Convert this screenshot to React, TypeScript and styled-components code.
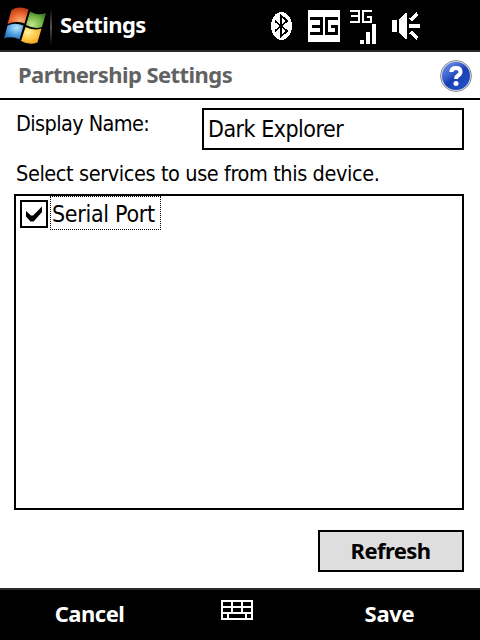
import React from "react";
import styled, { createGlobalStyle } from "styled-components";

const GlobalStyle = createGlobalStyle`
  * { box-sizing: border-box; }
  body { margin: 0; background: #fff; }
`;

const regular = `"DejaVu Sans Condensed", "DejaVu Sans", sans-serif`;
const bold = `"Noto Sans", "Open Sans", sans-serif`;

const Screen = styled.div`
  width: 480px;
  height: 640px;
  display: flex;
  flex-direction: column;
  background: #fff;
  color: #000;
  overflow: hidden;
`;

const Label = styled.span<{ $track?: number; $heavy?: boolean; $size?: number }>`
  font-family: ${(p) => (p.$heavy ? bold : regular)};
  font-stretch: ${(p) => (p.$heavy ? "normal" : "condensed")};
  font-weight: ${(p) => (p.$heavy ? 700 : 400)};
  font-size: ${(p) => p.$size ?? 22}px;
  line-height: 30px;
  letter-spacing: ${(p) => p.$track ?? 0}px;
  white-space: nowrap;
`;

const StatusBar = styled.header`
  height: 52px;
  flex: none;
  display: flex;
  align-items: flex-start;
  background: #000;
  border-bottom: 2px solid #2a2a2a;
  color: #fff;
`;

const StartArea = styled.div`
  width: 60px;
  height: 50px;
  flex: none;
`;

const StatusTitle = styled.div`
  width: 210px;
  padding-top: 9px;
`;

const TitleBar = styled.div`
  height: 48px;
  flex: none;
  display: flex;
  justify-content: space-between;
  border-bottom: 2px solid #000;
  padding: 7px 7px 0 18px;
  color: #626262;
`;

const Content = styled.main`
  flex: 1;
  display: flex;
  flex-direction: column;
  padding: 8px 16px 16px 14px;
`;

const NameRow = styled.div`
  display: flex;
  justify-content: space-between;
  padding-left: 2px;
`;

const NameCaption = styled.div`
  padding-top: 1px;
`;

const NameField = styled.div`
  width: 262px;
  height: 42px;
  border: 2px solid #000;
  padding: 4px 4px;
`;

const Hint = styled.div`
  height: 44px;
  padding: 9px 0 0 2px;
`;

const ServiceList = styled.div`
  height: 316px;
  border: 2px solid #000;
  padding: 0 4px;
`;

const ServiceItem = styled.div`
  display: flex;
  align-items: flex-start;
  gap: 2px;
`;

const CheckBox = styled.svg`
  width: 28px;
  height: 28px;
  margin-top: 4px;
`;

const FocusedName = styled.div`
  width: 111px;
  height: 34px;
  border: 1px dotted #000;
  padding: 2px 0 0 1px;
`;

const RefreshButton = styled.button`
  align-self: flex-end;
  width: 146px;
  height: 42px;
  margin-top: 20px;
  padding: 0 1px 2px 0;
  border: 2px solid #000;
  border-radius: 0;
  background: #dedede;
  color: #000;
`;

const SoftKeys = styled.footer`
  height: 52px;
  flex: none;
  display: grid;
  grid-template-columns: 179px 116px 189px;
  justify-items: center;
  border-top: 2px solid #2a2a2a;
  background: #000;
  color: #fff;
`;

const SoftKey = styled.div`
  padding-top: 8px;
`;

const KeyboardIcon = styled.svg`
  width: 32px;
  height: 20px;
  margin-top: 10px;
`;

function StartLogo() {
  return (
    <svg width="60" height="50" viewBox="0 0 60 50">
      <defs>
        <radialGradient id="r" cx="0.6" cy="0.8" r="0.8"><stop stopColor="#f8b07a" /><stop offset="0.5" stopColor="#ee6a34" /><stop offset="1" stopColor="#b8380e" /></radialGradient>
        <radialGradient id="g" cx="0.3" cy="0.8" r="0.9"><stop stopColor="#c3e590" /><stop offset="0.5" stopColor="#7cba48" /><stop offset="1" stopColor="#2f7520" /></radialGradient>
        <radialGradient id="b" cx="0.65" cy="0.25" r="0.9"><stop stopColor="#b6e2fb" /><stop offset="0.5" stopColor="#4fa1e2" /><stop offset="1" stopColor="#145aab" /></radialGradient>
        <radialGradient id="y" cx="0.35" cy="0.3" r="0.9"><stop stopColor="#fff0a0" /><stop offset="0.5" stopColor="#fdc843" /><stop offset="1" stopColor="#ea8b12" /></radialGradient>
        <linearGradient id="d" x1="0" y1="0" x2="0" y2="1"><stop stopColor="#000" /><stop offset="0.5" stopColor="#555" /><stop offset="1" stopColor="#000" /></linearGradient>
      </defs>
      <path d="M11.500 10 Q19 5.500 28.500 9.500 L24.500 23.500 Q16 20.500 7.500 24Z" fill="url(#r)" />
      <path d="M30 11.500 Q38 16 46 13 L42 27 Q34 29.500 26 25Z" fill="url(#g)" />
      <path d="M7.500 25.500 Q15 22 23.500 25.500 L19.500 39.500 Q12 35.500 4 38.500Z" fill="url(#b)" />
      <path d="M25.500 27 Q33 31 41.500 28.500 L37.500 42.500 Q29 45.500 21 41Z" fill="url(#y)" />
      <rect x="50" y="8" width="2" height="38" fill="url(#d)" />
    </svg>
  );
}

function StatusIcons() {
  return (
    <svg width="160" height="50" viewBox="270 0 160 50" shapeRendering="crispEdges">
      <ellipse cx="281.500" cy="26" rx="10.500" ry="14" fill="#fff" />
      <path d="M275 21 L287 31 L281 36.500 V15.500 L287 21 L275 31" fill="none" stroke="#000" strokeWidth="1.800" />
      <rect x="308" y="10" width="32" height="32" fill="#fff" />
      <path d="M310 18.500H321.500V33.500H310M312 26H321.500M338 18.500H326.500V33.500H336.500V26.500H331" fill="none" stroke="#000" strokeWidth="3" />
      <path d="M350 11H359V22H350M351 16H359M372 11H363V22H371V17H366.500" fill="none" stroke="#fff" strokeWidth="2" />
      <path d="M360 40h4v4h-4zM366 32h4v12h-4zM372 24h4v20h-4zM392 20h5v12h-5zM399 20L405 13H407V39H405L399 32zM409 24h11v4h-11z" fill="#fff" />
      <path d="M410.500 20L417.500 13.500M410.500 32L417.500 38.500" stroke="#fff" strokeWidth="3.600" />
    </svg>
  );
}

function HelpIcon() {
  return (
    <svg width="34" height="34" viewBox="0 -1 34 34">
      <defs>
        <linearGradient id="h" x1="0" y1="0" x2="0.8" y2="1"><stop stopColor="#7d9ded" /><stop offset="0.45" stopColor="#3159c9" /><stop offset="0.55" stopColor="#1840b3" /><stop offset="1" stopColor="#2450c8" /></linearGradient>
      </defs>
      <circle cx="17" cy="16" r="15.500" fill="#d5d9df" stroke="#8d949e" />
      <circle cx="17" cy="16" r="14" fill="url(#h)" />
      <path d="M12.300 12Q12.500 8 17 8Q21.500 8 21.500 11.700Q21.500 14 19 15.500Q17 16.800 17 19" fill="none" stroke="#fff" strokeWidth="4" />
      <circle cx="17" cy="23.500" r="2.500" fill="#fff" />
    </svg>
  );
}

export default function App() {
  return (
    <>
      <GlobalStyle />
      <Screen>
        <StatusBar>
          <StartArea><StartLogo /></StartArea>
          <StatusTitle><Label $heavy $track={-0.55}>Settings</Label></StatusTitle>
          <StatusIcons />
        </StatusBar>
        <TitleBar>
          <Label $heavy $track={-0.55}>Partnership Settings</Label>
          <HelpIcon />
        </TitleBar>
        <Content>
          <NameRow>
            <NameCaption><Label $size={21.5} $track={-0.6}>Display Name:</Label></NameCaption>
            <NameField><Label $size={23} $track={-0.5}>Dark Explorer</Label></NameField>
          </NameRow>
          <Hint><Label $size={21.5} $track={-0.4}>Select services to use from this device.</Label></Hint>
          <ServiceList>
            <ServiceItem>
              <CheckBox viewBox="0 0 28 28">
                <rect x="1" y="1" width="26" height="26" fill="#fff" stroke="#000" strokeWidth="2" />
                <path d="M6 11L11 15.500L13 15.500L22 6.500V12L15 20L13.500 21.500H10.500L6 16.500Z" />
              </CheckBox>
              <FocusedName><Label $size={23} $track={-0.3}>Serial Port</Label></FocusedName>
            </ServiceItem>
          </ServiceList>
          <RefreshButton><Label $heavy $track={-0.6}>Refresh</Label></RefreshButton>
        </Content>
        <SoftKeys>
          <SoftKey><Label $heavy $track={-0.5}>Cancel</Label></SoftKey>
          <KeyboardIcon viewBox="0 0 32 20" shapeRendering="crispEdges">
            <path d="M1 1H31V19H1ZM1 7H31M1 13H31M11 1V13M21 1V13M7 13V19M25 13V19" fill="none" stroke="#fff" strokeWidth="2" />
          </KeyboardIcon>
          <SoftKey><Label $heavy $track={-0.3}>Save</Label></SoftKey>
        </SoftKeys>
      </Screen>
    </>
  );
}
